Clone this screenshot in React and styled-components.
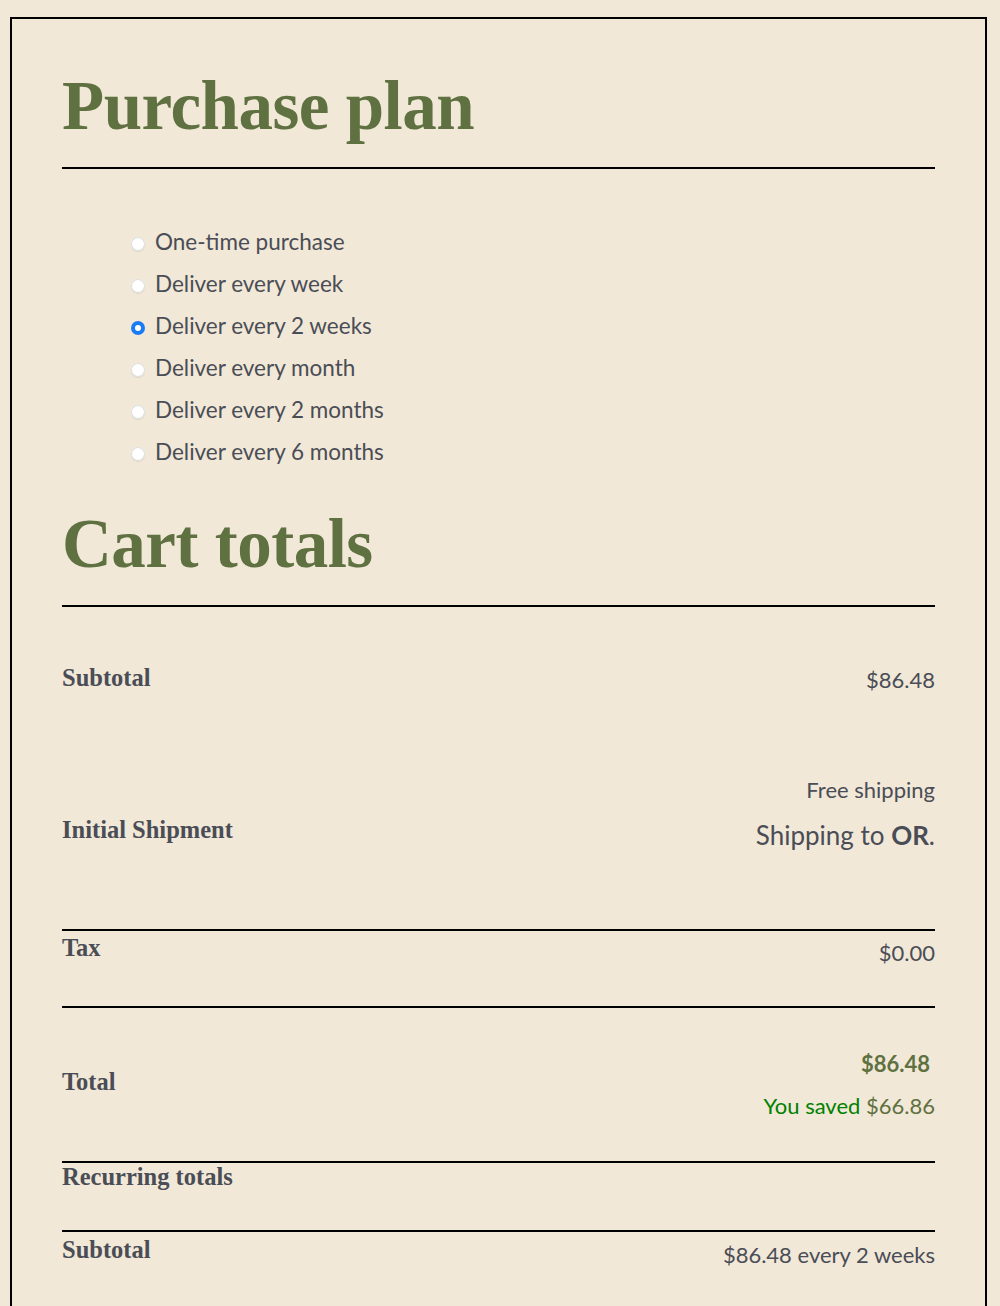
import React, { useState } from 'react';
import styled, { createGlobalStyle } from 'styled-components';

const Global = createGlobalStyle`
    html, body {
        margin:0;
        background:#f1e8d8;
    }
    body {
        padding:17px 13px 0 10px;
        font-family:"Lato", "Liberation Sans", sans-serif;
        color:#4a4d55;
    }
`;

const Frame = styled.div`
    border:2px solid #000;
    border-bottom:none;
    padding:46px 50px 40px 50px;
    min-height:1300px;
    box-sizing:border-box;
`;

const Heading = styled.h2`
    font-family:"Liberation Serif", serif;
    font-weight:bold;
    font-size:69px;
    line-height:83px;
    color:#5f7140;
    margin:0;
    padding-bottom:19px;
    border-bottom:2px solid #000;
    letter-spacing:-0.5px;
`;

const Options = styled.ul`
    list-style:none;
    margin:0;
    padding:59px 0 37px 69px;
    display:flex;
    flex-direction:column;
    gap:14px;
`;

const Option = styled.label`
    display:flex;
    align-items:center;
    gap:10px;
    font-size:22.5px;
    line-height:28px;
    cursor:pointer;
`;

const Radio = styled.input`
    appearance:none;
    margin:0;
    width:14px;
    height:14px;
    border-radius:50%;
    background:#fff;
    box-shadow:0 0 0 1px #ddd inset, 0 1px 1px rgba(0,0,0,0.08);
    position:relative;
    top:2px;

    &:checked{
        background:#1a7cf5;
        box-shadow:none;
    }
    &:checked::after{
        content:'';
        position:absolute;
        left:4px;
        top:4px;
        width:6px;
        height:6px;
        border-radius:50%;
        background:#fff;
    }
`;

const Table = styled.div`
    display:flex;
    flex-direction:column;
`;

const Row = styled.div`
    display:flex;
    justify-content:space-between;
    align-items:${p => p.$align || 'flex-start'};
    border-top:${p => p.$line ? '2px solid #000' : 'none'};
    padding:${p => p.$pad || '0'};
    min-height:${p => p.$h || 'auto'};
    box-sizing:border-box;
`;

const Label = styled.div`
    font-family:"Liberation Serif", serif;
    font-weight:bold;
    font-size:24.5px;
    line-height:28px;
    color:#4a4d55;
    margin-top:${p => p.$top || '0'};
    margin-bottom:${p => p.$bottom || '0'};
`;

const Value = styled.div`
    text-align:right;
    font-size:${p => p.$size || '22px'};
    line-height:28px;
    color:${p => p.$color || '#4a4d55'};
    font-weight:${p => p.$bold ? 'bold' : 'normal'};
    margin-right:${p => p.$shift || '0'};
    margin-top:${p => p.$top || '0'};
`;

const Stack = styled.div`
    display:flex;
    flex-direction:column;
    align-items:flex-end;
    gap:${p => p.$gap || '14px'};
    padding-top:${p => p.$top || '0'};
`;

const Green = styled.span`
    color:#008000;
`;

const Olive = styled.span`
    color:#5f7140;
`;

const plans = [
    'One-time purchase',
    'Deliver every week',
    'Deliver every 2 weeks',
    'Deliver every month',
    'Deliver every 2 months',
    'Deliver every 6 months',
];

export default function App() {
    const [plan, setPlan] = useState(2);

    return (
        <>
            <Global />
            <Frame>
                <Heading>Purchase plan</Heading>
                <Options>
                    {plans.map((p, i) => (
                        <li key={p}>
                            <Option>
                                <Radio type="radio" name="plan" checked={plan === i} onChange={() => setPlan(i)} />
                                {p}
                            </Option>
                        </li>
                    ))}
                </Options>

                <Heading>Cart totals</Heading>
                <Table>
                    <Row $pad="57px 0 0" $h="152px">
                        <Label>Subtotal</Label>
                        <Value $top="2px">$86.48</Value>
                    </Row>
                    <Row $h="170px">
                        <Label $top="57px">Initial Shipment</Label>
                        <Stack $gap="17px" $top="17px">
                            <Value>Free shipping</Value>
                            <Value $size="26px">Shipping to <b>OR</b>.</Value>
                        </Stack>
                    </Row>
                    <Row $line $pad="3px 0 0" $h="77px">
                        <Label>Tax</Label>
                        <Value $top="5px">$0.00</Value>
                    </Row>
                    <Row $line $align="center" $h="155px">
                        <Label $bottom="6px">Total</Label>
                        <Stack>
                            <Value $bold $color="#5f7140" $shift="5px">$86.48</Value>
                            <Value><Green>You saved</Green> <Olive>$66.86</Olive></Value>
                        </Stack>
                    </Row>
                    <Row $line $h="69px">
                        <Label>Recurring totals</Label>
                    </Row>
                    <Row $line $pad="4px 0 0">
                        <Label>Subtotal</Label>
                        <Value $top="5px">$86.48 every 2 weeks</Value>
                    </Row>
                </Table>
            </Frame>
        </>
    );
}
